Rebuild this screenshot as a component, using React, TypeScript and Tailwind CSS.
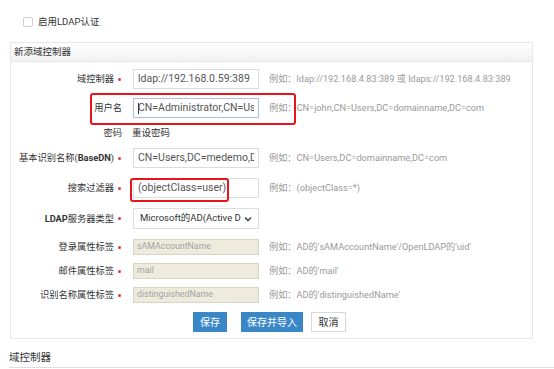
import React from 'react';

const font = 'font-["Roboto","Noto_Sans_CJK_SC",sans-serif]';

type RowProps = {
  label: React.ReactNode;
  required?: boolean;
  className: string;
  children: React.ReactNode;
  hint?: string;
};

function Row({ label, required = false, className, children, hint }: RowProps) {
  return (
    <div className={`flex items-center ${className}`}>
      <div className="w-[111px] shrink-0 flex justify-end items-center text-[#333] text-[9.25px] whitespace-nowrap">
        <span>{label}</span>
        {required && <span className="ml-[4px] mr-[1px] w-[3px] h-[3px] rounded-full bg-[#e4393c]" />}
      </div>
      <div className="ml-[11px] shrink-0 flex items-center h-full">{children}</div>
      {hint && <div className="ml-[10px] text-[#9a9a9a] text-[9.2px] whitespace-nowrap">{hint}</div>}
    </div>
  );
}

function TextBox({ value, focused = false }: { value: string; focused?: boolean }) {
  return (
    <div
      className={`w-[126px] h-full border ${
        focused ? 'border-[#a9bfe0]' : 'border-[#dcdcdc]'
      } bg-white flex items-center px-[4px] overflow-hidden text-[10.5px] text-[#555] whitespace-nowrap`}
    >
      {focused && <span className="shrink-0 w-px h-[11px] bg-[#333] mr-[-1px]" />}
      <span className="min-w-0 overflow-hidden">{value}</span>
    </div>
  );
}

function Disabled({ value }: { value: string }) {
  return (
    <div className="w-[126px] h-full border border-[#d7d3c5] bg-[#eeebdd] flex items-center px-[3px] overflow-hidden text-[8.8px] text-[#a3a3a3] whitespace-nowrap">
      {value}
    </div>
  );
}

export default function App() {
  return (
    <div className={`relative w-[554px] h-[369px] bg-white overflow-hidden ${font}`}>
      <div className="flex items-center pt-[17px] pl-[23px] h-[27px]">
        <span className="w-[10px] h-[10px] rounded-[2px] border border-[#cfcfcf] bg-white" />
        <span className="ml-[5px] text-[9.5px] text-[#333]">启用LDAP认证</span>
      </div>

      <div className="ml-[10px] mt-[15px] w-[523px] border border-[#e8e8e8] pb-[6px]">
        <div className="h-[19px] border-b border-[#e6e6e6] bg-gradient-to-b from-white to-[#f1f1f1] flex items-center pl-[3px] text-[9.5px] text-[#333]">
          新添域控制器
        </div>

        <Row label="域控制器" required className="mt-[7px] h-[20px]" hint="例如：ldap://192.168.4.83:389 或 ldaps://192.168.4.83:389">
          <TextBox value="ldap://192.168.0.59:389" />
        </Row>
        <Row label="用户名" className="mt-[9px] h-[20px]" hint="例如：CN=john,CN=Users,DC=domainname,DC=com">
          <TextBox value="CN=Administrator,CN=Users" focused />
        </Row>
        <Row label="密码" className="mt-[5px] h-[20px]">
          <span className="text-[9.5px] text-[#333] ml-[-1px]">重设密码</span>
        </Row>
        <Row
          label={<>基本识别名称(<span className="font-bold">BaseDN</span>)</>}
          required
          className="mt-[5px] h-[20px]"
          hint="例如：CN=Users,DC=domainname,DC=com"
        >
          <TextBox value="CN=Users,DC=medemo,DC=com" />
        </Row>
        <Row label="搜索过滤器" required className="mt-[10px] h-[20px]" hint="例如：(objectClass=*)">
          <TextBox value="(objectClass=user)" />
        </Row>
        <Row label={<><span className="font-bold">LDAP</span>服务器类型</>} required className="mt-[10px] h-[21px]">
          <div className="w-[126px] h-full border border-[#dcdcdc] bg-white flex items-center justify-between pl-[6px] pr-[6px] text-[9.5px] text-[#333] whitespace-nowrap overflow-hidden">
            <span className="min-w-0 overflow-hidden">Microsoft的AD(Active Di</span>
            <svg width="8" height="6" viewBox="0 0 8 6" className="shrink-0 ml-[3px]">
              <path d="M1 1.5 L4 4.5 L7 1.5" stroke="#333" strokeWidth="1.3" fill="none" />
            </svg>
          </div>
        </Row>
        <Row label="登录属性标签" required className="mt-[10px] h-[16px]" hint="例如：AD的'sAMAccountName'/OpenLDAP的'uid'">
          <Disabled value="sAMAccountName" />
        </Row>
        <Row label="邮件属性标签" required className="mt-[8px] h-[16px]" hint="例如：AD的'mail'">
          <Disabled value="mail" />
        </Row>
        <Row label="识别名称属性标签" required className="mt-[8px] h-[16px]" hint="例如：AD的'distinguishedName'">
          <Disabled value="distinguishedName" />
        </Row>

        <div className="mt-[9px] h-[20px] flex pl-[182px] text-[10px]">
          <button className="w-[34px] h-full bg-[#3a87c8] text-white">保存</button>
          <button className="ml-[14px] w-[62px] h-full bg-[#3a87c8] text-white">保存并导入</button>
          <button className="ml-[8px] w-[35px] h-full bg-white border border-[#d9d9d9] text-[#333]">取消</button>
        </div>
      </div>

      <div className="ml-[9px] mt-[11px] pb-[2px] border-b border-[#dedede] text-[10.5px] leading-[15px] text-[#333]">域控制器</div>

      <div className="absolute left-[90px] top-[93px] w-[206px] h-[32px] border-2 border-[#e8141b] rounded-[3px]" />
      <div className="absolute left-[130px] top-[178px] w-[99px] h-[24px] border-2 border-[#e8141b] rounded-[3px]" />
    </div>
  );
}
